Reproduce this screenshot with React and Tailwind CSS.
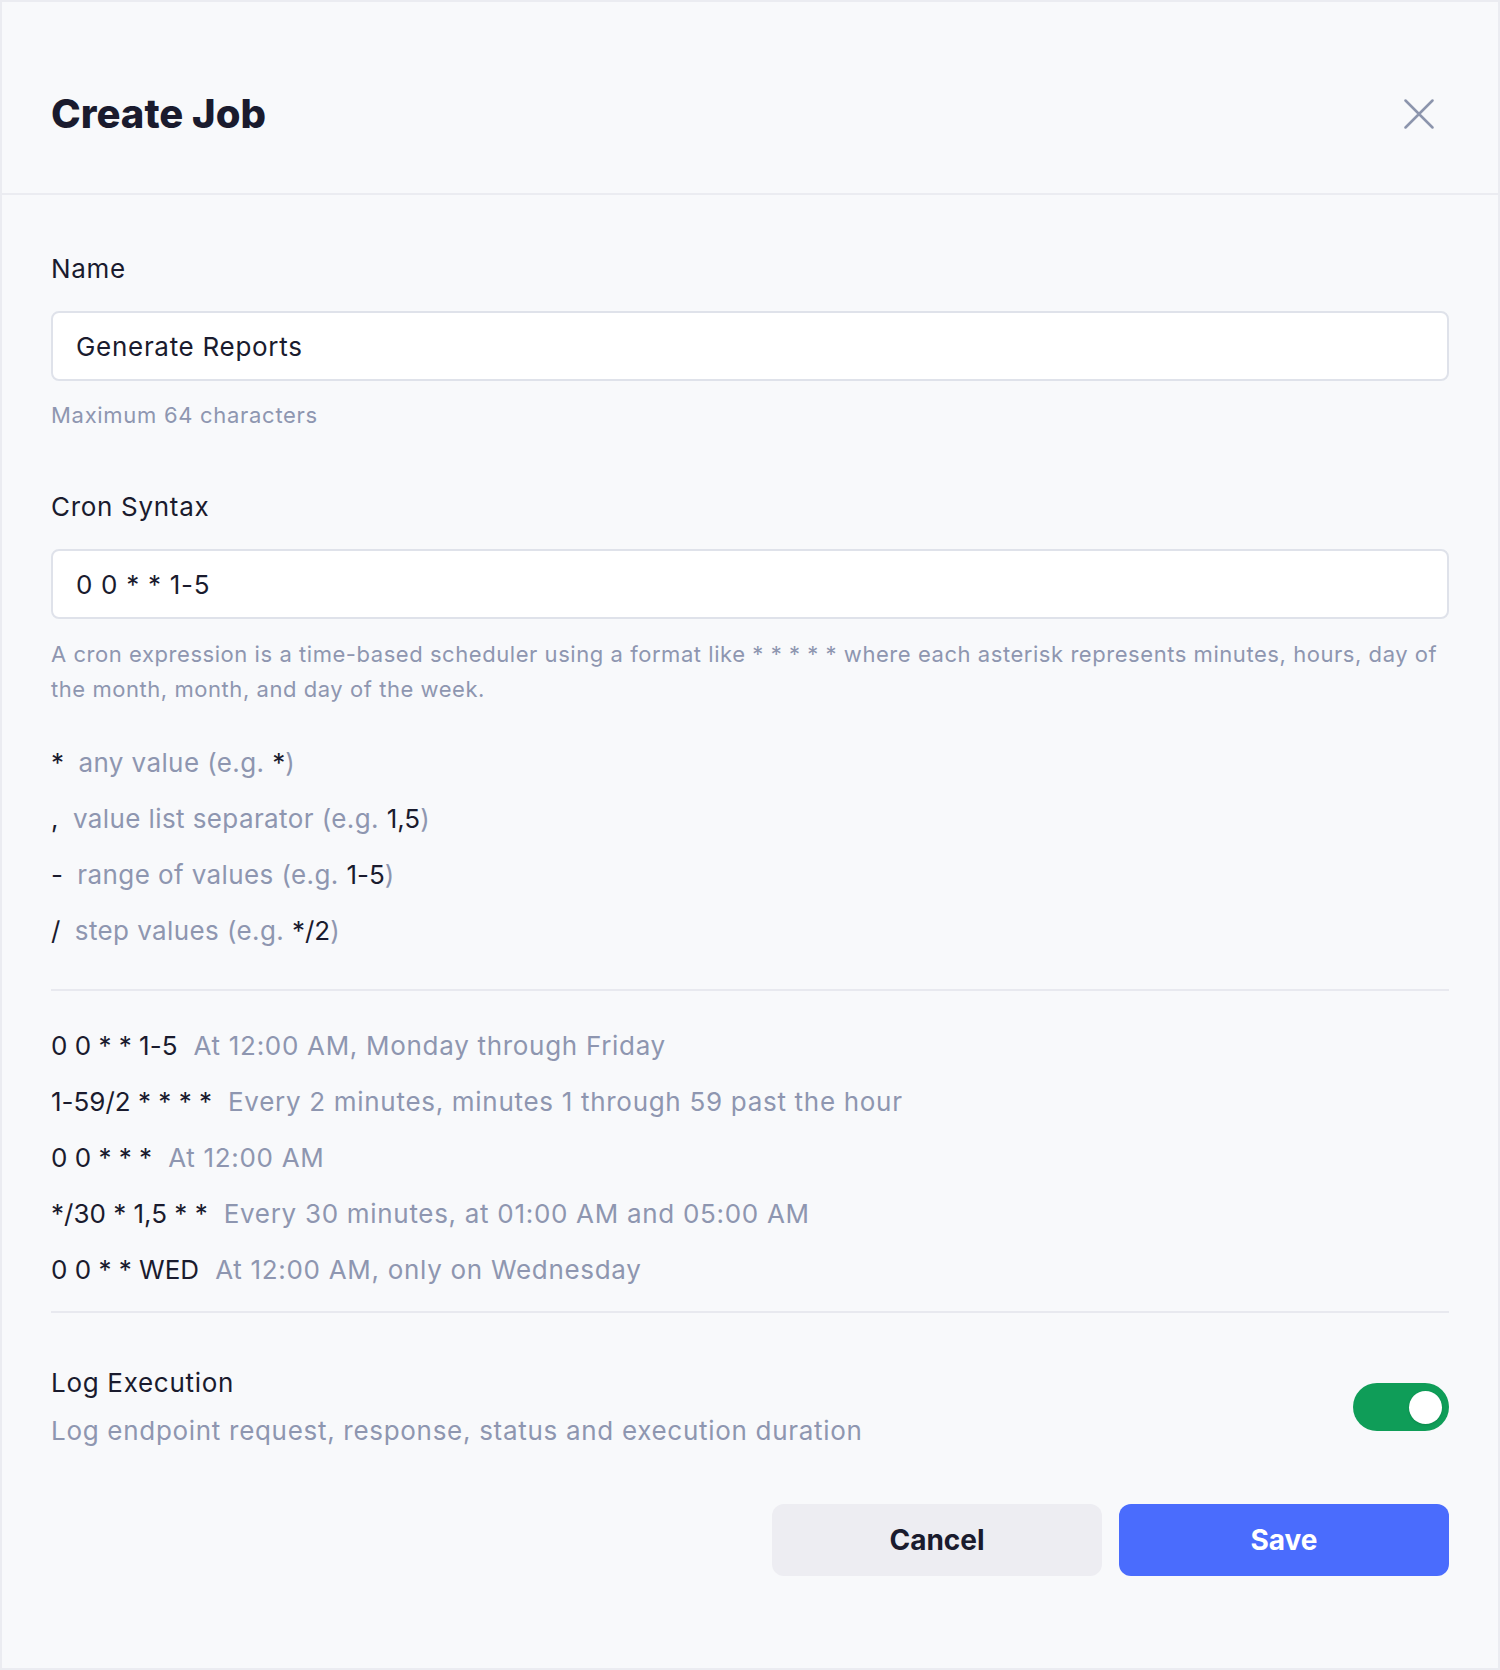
import React, { useState } from 'react';

const legend = [
    { sym: '*', text: 'any value', ex: '*' },
    { sym: ',', text: 'value list separator', ex: '1,5' },
    { sym: '-', text: 'range of values', ex: '1-5' },
    { sym: '/', text: 'step values', ex: '*/2' },
];

const examples = [
    ['0 0 * * 1-5', 'At 12:00 AM, Monday through Friday'],
    ['1-59/2 * * * *', 'Every 2 minutes, minutes 1 through 59 past the hour'],
    ['0 0 * * *', 'At 12:00 AM'],
    ['*/30 * 1,5 * *', 'Every 30 minutes, at 01:00 AM and 05:00 AM'],
    ['0 0 * * WED', 'At 12:00 AM, only on Wednesday'],
];

const App = () => {
    const [name, setName] = useState('Generate Reports');
    const [cron, setCron] = useState('0 0 * * 1-5');
    const [logExec, setLogExec] = useState(true);

    return (
        <div className="w-[1500px] h-[1670px] border-2 border-[#ebecf1] bg-[#f8f9fb] font-['Inter',sans-serif] [font-feature-settings:'calt'_0] text-[#1a1b2e] flex flex-col">
            {/* Header */}
            <div className="flex items-center justify-between px-[49px] pt-[82px] pb-[49px] border-b-2 border-[#ebecf1]">
                <h2 className="text-[40px] leading-[48px] font-extrabold">Create Job</h2>
                <button className="w-[60px] h-[60px] flex items-center justify-center text-[#8c95ad]">
                    <svg width="30" height="30" viewBox="0 0 30 30" fill="none" stroke="currentColor" strokeWidth="2.5" strokeLinecap="round">
                        <path d="M1.5 1.5 L28.5 28.5 M28.5 1.5 L1.5 28.5" />
                    </svg>
                </button>
            </div>

            {/* Body */}
            <div className="px-[49px] pt-[56px] flex flex-col tracking-[0.7px]">
                <label className="text-[26px] leading-[36px]">Name</label>
                <input
                    value={name}
                    onChange={e => setName(e.target.value)}
                    className="mt-[24px] h-[70px] w-full bg-white border-2 border-[#dfe2ea] rounded-[8px] px-[23px] text-[26px] tracking-[0.7px] text-[#1a1b2e] outline-none"
                />
                <p className="mt-[18px] text-[22px] leading-[32px] text-[#8e96b0]">Maximum 64 characters</p>

                <label className="mt-[58px] text-[26px] leading-[36px]">Cron Syntax</label>
                <input
                    value={cron}
                    onChange={e => setCron(e.target.value)}
                    className="mt-[24px] h-[70px] w-full bg-white border-2 border-[#dfe2ea] rounded-[8px] px-[23px] text-[26px] tracking-[0.7px] text-[#1a1b2e] outline-none"
                />
                <p className="mt-[18px] text-[22px] leading-[35px] tracking-[0.55px] text-[#8e96b0]">
                    A cron expression is a time-based scheduler using a format like * * * * * where each asterisk represents minutes, hours, day of the month, month, and day of the week.
                </p>

                <div className="mt-[38px] flex flex-col gap-[20px] text-[26px] leading-[36px] tracking-[0.4px]">
                    {legend.map(item => (
                        <div key={item.sym} className="flex gap-[14px]">
                            <span>{item.sym}</span>
                            <span className="text-[#8e96b0]">
                                {item.text} (e.g. <span className="text-[#1a1b2e] tracking-normal">{item.ex}</span>)
                            </span>
                        </div>
                    ))}
                </div>

                <div className="mt-[40px] h-[2px] bg-[#e8e9ef]" />

                <div className="mt-[37px] flex flex-col gap-[20px] text-[26px] leading-[36px]">
                    {examples.map(([expr, desc]) => (
                        <div key={expr} className="flex gap-4">
                            <span className="tracking-normal">{expr}</span>
                            <span className="text-[#8e96b0]">{desc}</span>
                        </div>
                    ))}
                </div>

                <div className="mt-[23px] h-[2px] bg-[#e8e9ef]" />

                {/* Log execution */}
                <div className="mt-[52px] flex items-center justify-between">
                    <div>
                        <div className="text-[26px] leading-[36px]">Log Execution</div>
                        <div className="mt-[12px] text-[26px] leading-[36px] text-[#8e96b0]">
                            Log endpoint request, response, status and execution duration
                        </div>
                    </div>
                    <button
                        onClick={() => setLogExec(!logExec)}
                        className={`w-[96px] h-[48px] rounded-full flex items-center px-[7px] ${logExec ? 'bg-[#0f9d58] justify-end' : 'bg-[#d5d8e2] justify-start'}`}
                    >
                        <span className="w-[33px] h-[33px] rounded-full bg-white shadow-sm" />
                    </button>
                </div>

                {/* Actions */}
                <div className="mt-[55px] flex justify-end gap-[17px] tracking-normal">
                    <button className="w-[330px] h-[72px] rounded-[12px] bg-[#ededf2] text-[28px] font-bold text-[#1a1b2e]">Cancel</button>
                    <button className="w-[330px] h-[72px] rounded-[12px] bg-[#4a6cfd] text-[28px] font-bold text-white">Save</button>
                </div>
            </div>
        </div>
    );
};

export default App;
